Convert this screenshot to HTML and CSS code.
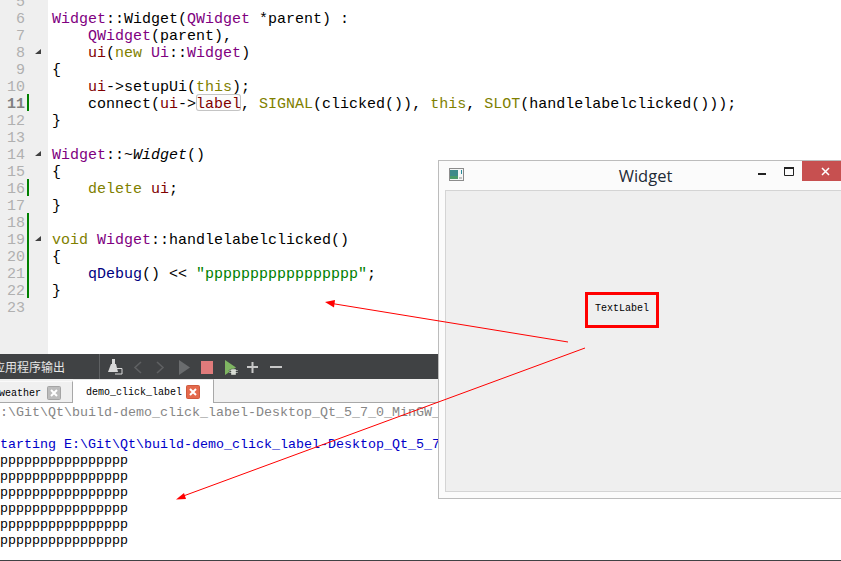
FILE: index.html
```html
<!DOCTYPE html>
<html lang="zh">
<head>
<meta charset="utf-8">
<title>Widget</title>
<link rel="stylesheet" href="styles.css">
</head>
<body>
<div class="page">
  <section class="editor">
    <div class="gutter">
      <div class="gline"><span class="num">5</span></div>
      <div class="gline"><span class="num">6</span></div>
      <div class="gline"><span class="num">7</span></div>
      <div class="gline"><span class="num">8</span><i class="fold"></i></div>
      <div class="gline"><span class="num">9</span></div>
      <div class="gline"><span class="num">10</span></div>
      <div class="gline changed"><span class="num cur">11</span></div>
      <div class="gline"><span class="num">12</span></div>
      <div class="gline"><span class="num">13</span></div>
      <div class="gline"><span class="num">14</span><i class="fold"></i></div>
      <div class="gline"><span class="num">15</span></div>
      <div class="gline changed"><span class="num">16</span></div>
      <div class="gline"><span class="num">17</span></div>
      <div class="gline changed"><span class="num">18</span></div>
      <div class="gline changed"><span class="num">19</span><i class="fold"></i></div>
      <div class="gline changed"><span class="num">20</span></div>
      <div class="gline changed"><span class="num">21</span></div>
      <div class="gline changed"><span class="num">22</span></div>
      <div class="gline"><span class="num">23</span></div>
    </div>
    <div class="code">
      <div class="cline"> </div>
      <div class="cline"><b class="ty">Widget</b>::Widget(<b class="ty">QWidget</b> *parent) :</div>
      <div class="cline">    <b class="ty">QWidget</b>(parent),</div>
      <div class="cline">    <b class="mem">ui</b>(<b class="kw">new</b> <b class="ty">Ui</b>::<b class="ty">Widget</b>)</div>
      <div class="cline">{</div>
      <div class="cline">    <b class="mem">ui</b>-&gt;setupUi(<b class="kw">this</b>);</div>
      <div class="cline">    connect(<b class="mem">ui</b>-&gt;<b class="mem use">label</b>, <b class="kw">SIGNAL</b>(clicked()), <b class="kw">this</b>, <b class="kw">SLOT</b>(handlelabelclicked()));</div>
      <div class="cline">}</div>
      <div class="cline"> </div>
      <div class="cline"><b class="ty">Widget</b>::~<em class="dtor">Widget</em>()</div>
      <div class="cline">{</div>
      <div class="cline">    <b class="kw">delete</b> <b class="mem">ui</b>;</div>
      <div class="cline">}</div>
      <div class="cline"> </div>
      <div class="cline"><b class="kw">void</b> <b class="ty">Widget</b>::handlelabelclicked()</div>
      <div class="cline">{</div>
      <div class="cline">    <b class="fn">qDebug</b>() &lt;&lt; <b class="str">"ppppppppppppppppp"</b>;</div>
      <div class="cline">}</div>
      <div class="cline"> </div>
    </div>
  </section>

  <section class="panel">
    <div class="toolbar">
      <span class="panel-title">应用程序输出</span>
      <span class="sep"></span>
      <div class="tools">
        <svg class="tool" viewBox="0 0 23 25"><path d="M8 5h3v5H8z" fill="#d8d8d8"/><path d="M7 10h5l2 8H4z" fill="#d8d8d8"/><path d="M12 14.5h6V20h-7" fill="none" stroke="#d8d8d8"/></svg>
        <svg class="tool" viewBox="0 0 23 25"><path d="M14 8l-6 5.5 6 5.5" fill="none" stroke="#5e6062" stroke-width="1.6"/></svg>
        <svg class="tool" viewBox="0 0 23 25"><path d="M7 8l6 5.5-6 5.5" fill="none" stroke="#5e6062" stroke-width="1.6"/></svg>
        <svg class="tool" viewBox="0 0 23 25"><path d="M6 6l11 7.5L6 21z" fill="#6a6c6e"/></svg>
        <svg class="tool" viewBox="0 0 23 25"><path d="M5 7h12v13H5z" fill="#e07b7b"/></svg>
        <svg class="tool" viewBox="0 0 23 25"><path d="M6 6l11 7.5L6 21z" fill="#7fb562"/><path d="M12 15h5v1h2v1h-2v1h2v1h-2v2h-5v-2h-2v-1h2v-1h-2v-1h2z" fill="#d8dcd4" stroke="#404244" stroke-width=".4"/></svg>
        <svg class="tool" viewBox="0 0 23 25"><path d="M5 13h11M10.500 8v11" fill="none" stroke="#c8c8c8" stroke-width="2"/></svg>
        <svg class="tool" viewBox="0 0 23 25"><path d="M5 13h12" fill="none" stroke="#c8c8c8" stroke-width="2"/></svg>
      </div>
    </div>
    <div class="tabs">
      <div class="tab"><span class="tabtext">weather</span><svg class="tclose" viewBox="0 0 14 14"><rect x=".5" y=".5" width="13" height="13" rx="1" fill="#bcbcbc" stroke="#a4a4a4"/><path d="M4 4l6 6M10 4l-6 6" stroke="#fff" stroke-width="2"/></svg></div>
      <div class="tab active"><span class="tabtext">demo_click_label</span><svg class="tclose" viewBox="0 0 14 14"><rect x=".5" y=".5" width="13" height="13" rx="1" fill="#e4694c" stroke="#cf5a3e"/><path d="M4 4l6 6M10 4l-6 6" stroke="#fff" stroke-width="2"/></svg></div>
    </div>
    <div class="output">
      <div class="oline gray">E:\Git\Qt\build-demo_click_label-Desktop_Qt_5_7_0_MinGW_32bit-Debug\debug\demo_click_label.exe</div>
      <div class="oline"> </div>
      <div class="oline blue">Starting E:\Git\Qt\build-demo_click_label-Desktop_Qt_5_7_0_MinGW_32bit-Debug\debug\demo_click_label.exe...</div>
      <div class="oline">ppppppppppppppppp</div>
      <div class="oline">ppppppppppppppppp</div>
      <div class="oline">ppppppppppppppppp</div>
      <div class="oline">ppppppppppppppppp</div>
      <div class="oline">ppppppppppppppppp</div>
      <div class="oline">ppppppppppppppppp</div>
    </div>
  </section>

  <section class="window">
    <header class="titlebar">
      <svg class="appicon" viewBox="0 0 15 13"><rect x=".5" y=".5" width="14" height="12" fill="#f4f6f6" stroke="#8c8c8c"/><rect x="1" y="2" width="8" height="9" fill="#3d8a8a"/><rect x="1" y="8" width="8" height="3" fill="#4a9a6a"/><rect x="10" y="9" width="3" height="2" fill="#c4c4c4"/><rect x="12" y="2" width="1" height="4" fill="#2a8a9a"/></svg>
      <span class="wtitle">Widget</span>
      <div class="controls">
        <svg class="wmin" viewBox="0 0 29 20"><rect x="10" y="12" width="8" height="2" fill="#222"/></svg>
        <svg class="wmax" viewBox="0 0 25 20"><path d="M7.500 7h9v7.500h-9z" fill="none" stroke="#222"/><rect x="7" y="6" width="10" height="2" fill="#222"/></svg>
        <div class="wclose"><svg class="wx" viewBox="0 0 9 9"><path d="M1 1l7 7M8 1L1 8" stroke="#fff" stroke-width="1.500"/></svg></div>
      </div>
    </header>
    <div class="client">
      <div class="textlabel">TextLabel</div>
    </div>
  </section>

  <svg class="arrows" viewBox="0 0 841 561">
    <path d="M568 342L332 303.500M585 348L182 496.500" fill="none" stroke="#f00"/>
    <path d="M325 302l10-2-1 7.500z" fill="#f00"/>
    <path d="M176 499.500l8-6.500 2 6z" fill="#f00"/>
  </svg>
</div>
</body>
</html>
```

FILE: styles.css
```css
* { box-sizing: border-box; }
html, body { margin: 0; padding: 0; background: #fff; }
body { overflow: hidden; }

.page {
  position: relative;
  width: 841px;
  height: 561px;
  overflow: hidden;
  display: flex;
  flex-direction: column;
  font-family: "Liberation Mono", "Courier New", monospace;
}

/* Editor */
.editor {
  height: 354px;
  flex: none;
  display: flex;
  overflow: hidden;
  background: #fff;
  font-size: 15px;
  color: #000;
}
.gutter {
  width: 48px;
  flex: none;
  background: #efefef;
}
.gline, .cline { height: 17px; line-height: 22px; white-space: pre; }
.gutter .gline:first-child, .code .cline:first-child { margin-top: -8px; }
.gline { display: flex; position: relative; }
.num { width: 25px; text-align: right; color: #b0b0b0; }
.num.cur { color: #808080; font-weight: bold; }
.changed::before {
  content: "";
  position: absolute;
  left: 27px;
  top: 0;
  width: 2px;
  height: 17px;
  background: #008000;
}
.fold {
  position: absolute;
  left: 35px;
  top: 6px;
  width: 6px;
  height: 5px;
  background: #404040;
  clip-path: polygon(100% 0, 100% 100%, 0 100%);
}
.code { flex: 1; padding-left: 4px; min-width: 0; }
.code b { font-weight: normal; }
.ty { color: #800080; }
.kw { color: #808000; }
.mem { color: #800000; }
.fn { color: #000080; }
.str { color: #008000; }
.dtor { font-style: italic; }
.use {
  display: inline-block;
  vertical-align: top;
  height: 17px;
  line-height: 22px;
  border-radius: 3px;
  box-shadow: inset 0 0 0 1px #c4c4c4;
  background: #fcfcfc;
}

/* Output panel */
.panel { flex: 1; display: flex; flex-direction: column; min-height: 0; border-bottom: 1px solid #404244; }
.toolbar {
  height: 25px;
  flex: none;
  display: flex;
  align-items: center;
  background: #404244;
}
.panel-title {
  width: 99px;
  flex: none;
  text-indent: -7px;
  overflow: hidden;
  white-space: nowrap;
  font-family: "Noto Sans CJK SC", sans-serif;
  font-size: 12px;
  line-height: 25px;
  color: #e6e6e6;
}
.sep { width: 1px; height: 25px; background: #5f6163; flex: none; margin-right: 4px; }
.tools { display: flex; }
.tool { width: 23px; height: 25px; display: block; }

.tabs {
  height: 24px;
  flex: none;
  display: flex;
  background: #f0f0f0;
  border-bottom: 1px solid #a8a8a8;
  font-size: 10px;
}
.tab {
  display: flex;
  align-items: center;
  height: 22px;
  margin-top: 2px;
  width: 73px;
  border-top: 1px solid #fafafa;
  border-right: 1px solid #a8a8a8;
  color: #000;
  white-space: pre;
}
.tabtext { margin-left: -1px; position: relative; top: 1px; }
.tab .tclose { margin-left: 6px; }
.tab.active {
  width: 141px;
  height: 24px;
  margin-top: 0;
  padding-left: 13px;
  background: #fff;
  border-top: 1px solid #e8e8e8;
}
.tab.active .tabtext { margin-left: 0; }
.tab.active .tclose { margin-left: 4px; }
.tclose { width: 14px; height: 14px; display: block; flex: none; }

.output { flex: 1; margin-left: -8px; overflow: hidden; font-size: 13.333px; color: #000; }
.oline { height: 16px; line-height: 20px; white-space: pre; }
.gray { color: #868686; }
.blue { color: #0000c8; }

/* Floating Qt window */
.window {
  position: absolute;
  left: 438px;
  top: 160px;
  width: 415px;
  height: 339px;
  display: flex;
  flex-direction: column;
  background: #fbfbfb;
  border: 1px solid #bcbcbc;
}
.titlebar {
  height: 29px;
  flex: none;
  display: grid;
  grid-template-columns: 1fr auto 1fr;
  align-items: start;
}
.appicon { width: 15px; height: 13px; margin: 7px 0 0 10px; display: block; }
.wtitle {
  font-family: "Open Sans", "Noto Sans", sans-serif;
  font-size: 16.500px;
  line-height: 29px;
  color: #1e2a36;
}
.controls { display: flex; justify-content: flex-end; padding-right: 4px; }
.wmin { width: 29px; height: 20px; display: block; }
.wmax { width: 25px; height: 20px; display: block; }
.wclose {
  width: 46px;
  height: 20px;
  background: #c75050;
  display: flex;
  align-items: center;
  justify-content: center;
}
.wx { width: 9px; height: 9px; display: block; }
.client {
  flex: 1;
  margin: 0 6px 6px;
  padding: 101px 0 0 139px;
  background: #efefef;
  border: 1px solid #d4d4d4;
}
.textlabel {
  width: 74px;
  height: 36px;
  padding-bottom: 4px;
  border: 3px solid #f00;
  display: flex;
  align-items: center;
  justify-content: center;
  font-size: 10px;
  color: #000;
}

.arrows { position: absolute; left: 0; top: 0; width: 841px; height: 561px; pointer-events: none; }
```
